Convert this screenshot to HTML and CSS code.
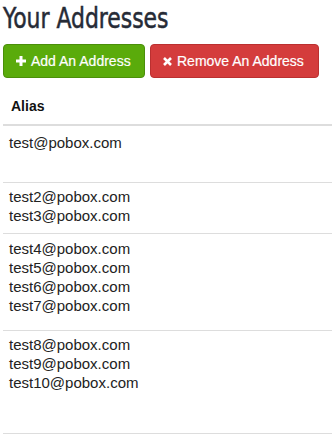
FILE: index.html
```html
<!DOCTYPE html>
<html>
<head>
  <meta charset="utf-8">
  <title>Your Addresses</title>
  <link rel="stylesheet" href="styles.css">
</head>
<body>
  <div class="wrap">
    <h1 class="title">Your Addresses</h1>
    <div class="actions">
      <button class="btn btn-add">
        <svg class="icon" width="10" height="10" viewBox="0 0 10 10"><path d="M5 0v10M0 5h10" stroke="#fff" stroke-width="3"/></svg>
        Add An Address
      </button>
      <button class="btn btn-remove">
        <svg class="icon" width="9" height="9" viewBox="0 0 9 9"><path d="M1 1l7 7M8 1l-7 7" stroke="#fff" stroke-width="2.6"/></svg>
        Remove An Address
      </button>
    </div>
    <table class="aliases">
      <thead>
        <tr><th>Alias</th></tr>
      </thead>
      <tbody>
        <tr class="row-1"><td>test@pobox.com</td></tr>
        <tr class="row-2"><td>test2@pobox.com<br>test3@pobox.com</td></tr>
        <tr class="row-3"><td>test4@pobox.com<br>test5@pobox.com<br>test6@pobox.com<br>test7@pobox.com</td></tr>
        <tr class="row-4"><td>test8@pobox.com<br>test9@pobox.com<br>test10@pobox.com</td></tr>
      </tbody>
    </table>
  </div>
</body>
</html>
```

FILE: styles.css
```css
*{margin: 0;padding: 0;box-sizing: border-box;}
html, body{
  background-color: #ffffff;
  color: #222222;
  font-family: "Liberation Sans", Arial, sans-serif;
  font-size: 14px;
}
.wrap{
  padding: 0 0 0 3px;
}
.title{
  font-family: "DejaVu Sans Condensed", sans-serif;
  font-weight: normal;
  font-size: 29px;
  line-height: 34px;
  color: #262b36;
  padding-top: 1px;
  -webkit-text-stroke: 0.5px #262b36;
  transform: scaleX(0.84);
  transform-origin: left center;
}
.actions{
  display: flex;
  gap: 5px;
  margin-top: 9px;
}
.btn{
  height: 34px;
  padding: 0 12px;
  font-family: "Liberation Sans", Arial, sans-serif;
  font-size: 14px;
  color: #ffffff;
  border: 1px solid;
  border-radius: 4px;
  cursor: pointer;
  display: flex;
  align-items: center;
  -webkit-text-stroke: 0.2px #ffffff;
}
.btn .icon{
  margin-right: 5px;
}
.btn-add{
  width: 142px;
  background-color: #5aab0b;
  border-color: #4b8f0a;
}
.btn-remove{
  width: 169px;
  background-color: #d43c3c;
  border-color: #bb3030;
}
.aliases{
  width: 100%;
  border-collapse: collapse;
  margin-top: 11px;
}
.aliases th{
  text-align: left;
  font-weight: bold;
  padding: 8px 8px 8px 8px;
  line-height: 19px;
  border-bottom: 2px solid #dddddd;
  color: #111111;
}
.aliases td{
  vertical-align: top;
  padding: 7px 6px 0 6px;
  font-size: 15px;
  line-height: 19px;
  border-bottom: 1px solid #dddddd;
}
.row-1 td{height: 57px;}
.row-2 td{height: 51px; padding-top: 4px;}
.row-3 td{height: 97px; padding-top: 5px;}
.row-4 td{height: 103px; padding-top: 4px;}
```
